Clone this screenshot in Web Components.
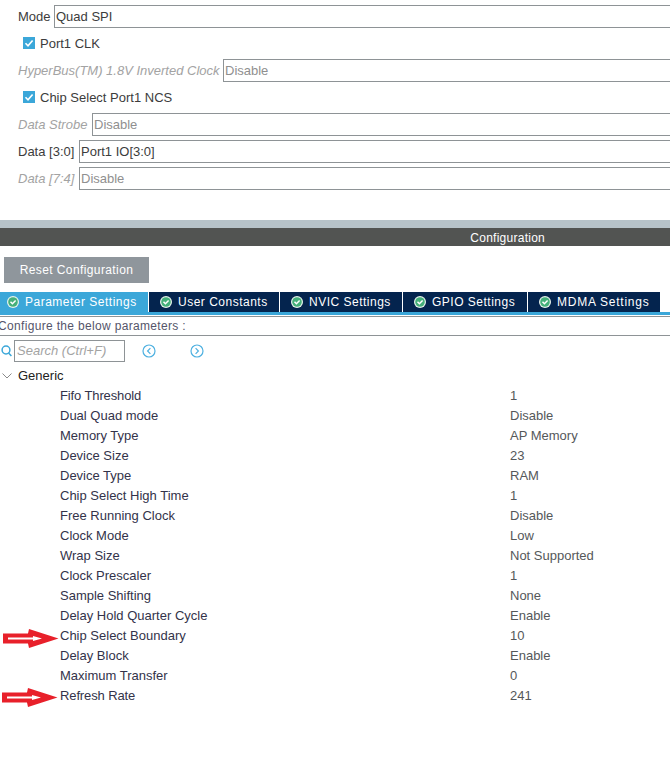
<!DOCTYPE html>
<html>
<head>
<meta charset="utf-8">
<title>Quad SPI</title>
<style>
  html, body { margin: 0; padding: 0; background: #fff; overflow: hidden; }
  body { font: 13px "Liberation Sans", Arial, sans-serif; color: #333; width: 670px; height: 757px; }
</style>
</head>
<body>
<qs-mode-panel>
  <qs-field label="Mode" value="Quad SPI" lw="36"></qs-field>
  <qs-check label="Port1 CLK"></qs-check>
  <qs-field label="HyperBus(TM) 1.8V Inverted Clock" value="Disable" lw="205" disabled></qs-field>
  <qs-check label="Chip Select Port1 NCS"></qs-check>
  <qs-field label="Data Strobe" value="Disable" lw="74" disabled></qs-field>
  <qs-field label="Data [3:0]" value="Port1 IO[3:0]" lw="61"></qs-field>
  <qs-field label="Data [7:4]" value="Disable" lw="61" disabled></qs-field>
</qs-mode-panel>
<qs-title-bar>Configuration</qs-title-bar>
<qs-reset-button>Reset Configuration</qs-reset-button>
<qs-tabs>
  <qs-tab active width="149">Parameter Settings</qs-tab>
  <qs-tab width="131">User Constants</qs-tab>
  <qs-tab width="123">NVIC Settings</qs-tab>
  <qs-tab width="125">GPIO Settings</qs-tab>
  <qs-tab width="132" style="letter-spacing:.75px">MDMA Settings</qs-tab>
</qs-tabs>
<qs-caption>Configure the below parameters :</qs-caption>
<qs-search></qs-search>
<qs-group label="Generic">
  <qs-param name="Fifo Threshold" value="1" style="letter-spacing:-.12px"></qs-param>
  <qs-param name="Dual Quad mode" value="Disable"></qs-param>
  <qs-param name="Memory Type" value="AP Memory"></qs-param>
  <qs-param name="Device Size" value="23"></qs-param>
  <qs-param name="Device Type" value="RAM"></qs-param>
  <qs-param name="Chip Select High Time" value="1"></qs-param>
  <qs-param name="Free Running Clock" value="Disable"></qs-param>
  <qs-param name="Clock Mode" value="Low"></qs-param>
  <qs-param name="Wrap Size" value="Not Supported"></qs-param>
  <qs-param name="Clock Prescaler" value="1"></qs-param>
  <qs-param name="Sample Shifting" value="None"></qs-param>
  <qs-param name="Delay Hold Quarter Cycle" value="Enable"></qs-param>
  <qs-param name="Chip Select Boundary" value="10" marked="3"></qs-param>
  <qs-param name="Delay Block" value="Enable"></qs-param>
  <qs-param name="Maximum Transfer" value="0"></qs-param>
  <qs-param name="Refresh Rate" value="241" marked="2" style="letter-spacing:-.12px"></qs-param>
</qs-group>

<script>
// small helper, every element below is just a template + open shadow root
function shadow(el, html) {
  el.attachShadow({ mode: 'open' });
  el.shadowRoot.innerHTML = html;
}

class QsModePanel extends HTMLElement {
  connectedCallback() {
    shadow(this, `
      <style>
        :host { display: flex; flex-direction: column; gap: 5px; padding: 5px 0 0 18px; height: 215px; box-sizing: border-box; overflow: hidden; }
      </style>
      <slot></slot>`);
  }
}

class QsField extends HTMLElement {
  connectedCallback() {
    const dis = this.hasAttribute('disabled');
    shadow(this, `
      <style>
        :host { display: grid; grid-template-columns: ${this.getAttribute('lw')}px 1fr; height: 22px; margin-right: -4px; }
        .l { line-height: 23px; white-space: nowrap; color: ${dis ? '#a3a3a3' : '#3c3c3c'}; font-style: ${dis ? 'italic' : 'normal'}; }
        .v { border: 1px solid #8e9396; border-width: 1px 0 1px 1px; padding-left: 1px; line-height: 21px; color: ${dis ? '#8f8f8f' : '#3c3c3c'}; box-sizing: border-box; }
      </style>
      <span class="l">${this.getAttribute('label')}</span>
      <span class="v">${this.getAttribute('value')}</span>`);
  }
}

class QsCheck extends HTMLElement {
  connectedCallback() {
    shadow(this, `
      <style>
        :host { display: flex; align-items: center; height: 22px; padding-left: 5px; gap: 5px; color: #3c3c3c; }
        .box { width: 12px; height: 12px; background: #3ba7d9; display: block; }
      </style>
      <svg class="box" viewBox="0 0 12 12"><path d="M2.5 6.2 5 8.8 9.6 3.4" fill="none" stroke="#fff" stroke-width="1.6"/></svg>
      <span>${this.getAttribute('label')}</span>`);
  }
}

class QsTitleBar extends HTMLElement {
  connectedCallback() {
    shadow(this, `
      <style>
        :host { display: block; border-top: 8px solid #b7c3c9; background: #525452; height: 18px; padding-right: 125px; text-align: right; color: #fff; font-size: 12px; letter-spacing: .25px; line-height: 20px; margin-top: 5px; }
      </style>
      <slot></slot>`);
  }
}

class QsResetButton extends HTMLElement {
  connectedCallback() {
    shadow(this, `
      <style>
        :host { display: block; width: 145px; height: 26px; margin: 11px 0 9px 4px; background: #8f969c; color: #fff; text-align: center; font-size: 12px; line-height: 26px; letter-spacing: .4px; }
      </style>
      <slot></slot>`);
  }
}

class QsTabs extends HTMLElement {
  connectedCallback() {
    shadow(this, `
      <style>
        :host { display: flex; height: 20px; border-bottom: 3px solid #3ba7d9; }
      </style>
      <slot></slot>`);
  }
}

class QsTab extends HTMLElement {
  connectedCallback() {
    const active = this.hasAttribute('active');
    shadow(this, `
      <style>
        :host { display: flex; align-items: center; box-sizing: border-box; width: ${this.getAttribute('width')}px; padding-left: ${active ? 7 : 11}px; gap: 6px; background: ${active ? '#3ba7d9' : '#04244e'}; color: #fff; font-size: 12px; letter-spacing: .5px; border-right: 1px solid #fff; white-space: nowrap; }
        :host(:last-child) { border-right: 0; }
        svg { width: 12px; height: 12px; flex: none; }
      </style>
      <svg viewBox="0 0 12 12"><circle cx="6" cy="6" r="6" fill="#e8f3ec"/><circle cx="6" cy="6" r="4.8" fill="#45b07a"/><path d="M3.5 5.8 5.4 7.7 8.6 4.4" fill="none" stroke="#fff" stroke-width="1.5"/></svg>
      <slot></slot>`);
  }
}

class QsCaption extends HTMLElement {
  connectedCallback() {
    shadow(this, `
      <style>
        :host { display: block; box-sizing: border-box; height: 20px; margin-top: 1px; margin-left: -2px; border-top: 1px solid #8e9396; border-bottom: 1px solid #8e9396; color: #55556a; font-size: 12px; line-height: 19px; letter-spacing: .33px; white-space: nowrap; }
      </style>
      <slot></slot>`);
  }
}

class QsSearch extends HTMLElement {
  connectedCallback() {
    shadow(this, `
      <style>
        :host { display: flex; align-items: center; height: 22px; margin-top: 4px; padding-left: 1px; }
        .input { box-sizing: border-box; width: 111px; height: 22px; margin-left: 2px; border: 1px solid #8e9396; padding-left: 2px; line-height: 20px; color: #a3a3a3; font-style: italic; white-space: nowrap; overflow: hidden; }
        svg { display: block; flex: none; }
        .prev { margin-left: 17px; }
        .next { margin-left: 34px; }
      </style>
      <svg width="11" height="12" viewBox="0 0 11 12" fill="none" stroke="#3ba7d9" stroke-width="1.5"><circle cx="5" cy="5" r="3.9"/><path d="M7.6 8 10.4 11"/></svg>
      <span class="input">Search (Ctrl+F)</span>
      <svg class="prev" width="14" height="14" viewBox="0 0 14 14" fill="none" stroke="#4db0e0" stroke-width="1.2"><circle cx="7" cy="7" r="6"/><path d="M8.4 4.2 5.6 7 8.4 9.8"/></svg>
      <svg class="next" width="14" height="14" viewBox="0 0 14 14" fill="none" stroke="#4db0e0" stroke-width="1.2"><circle cx="7" cy="7" r="6"/><path d="M5.6 4.2 8.4 7 5.6 9.8"/></svg>`);
  }
}

class QsGroup extends HTMLElement {
  connectedCallback() {
    shadow(this, `
      <style>
        :host { display: block; margin-top: 4px; }
        .head { display: flex; align-items: center; height: 20px; padding-left: 2px; gap: 6px; color: #222; }
        .head span { margin-bottom: 2px; }
        svg { display: block; }
      </style>
      <div class="head">
        <svg width="10" height="6" viewBox="0 0 10 6" fill="none" stroke="#8a8a8a" stroke-width="1"><path d="M.5.5 5 5 9.5.5"/></svg>
        <span>${this.getAttribute('label')}</span>
      </div>
      <slot></slot>`);
  }
}

class QsParam extends HTMLElement {
  connectedCallback() {
    const marked = this.getAttribute('marked');
    const arrow = marked ? `
      <svg class="arrow" style="left:${marked === '3' ? 3 : 2}px;top:${marked}px" width="56" height="20" viewBox="0 0 56 20">
        <path d="M0 4.5H25L26 0 55.5 9.5 26 19 25 14.5H0Z" fill="#e8202a"/>
        <path d="M5 8.5H30V7L39 9.5 30 12V10.5H5Z" fill="#fff"/>
      </svg>` : '';
    shadow(this, `
      <style>
        :host { display: grid; grid-template-columns: 450px 1fr; height: 20px; line-height: 19px; padding-left: 60px; position: relative; color: #33334a; }
        .v { color: #55585a; letter-spacing: 0; }
        .arrow { position: absolute; }
      </style>
      ${arrow}
      <span>${this.getAttribute('name')}</span>
      <span class="v">${this.getAttribute('value')}</span>`);
  }
}

customElements.define('qs-mode-panel', QsModePanel);
customElements.define('qs-field', QsField);
customElements.define('qs-check', QsCheck);
customElements.define('qs-title-bar', QsTitleBar);
customElements.define('qs-reset-button', QsResetButton);
customElements.define('qs-tabs', QsTabs);
customElements.define('qs-tab', QsTab);
customElements.define('qs-caption', QsCaption);
customElements.define('qs-search', QsSearch);
customElements.define('qs-group', QsGroup);
customElements.define('qs-param', QsParam);
</script>
</body>
</html>
